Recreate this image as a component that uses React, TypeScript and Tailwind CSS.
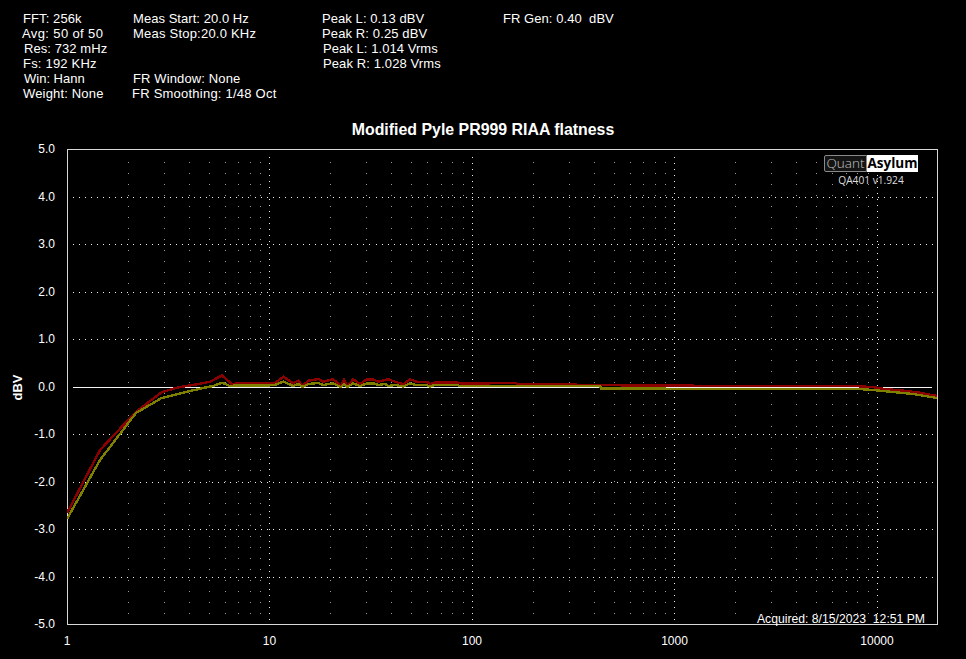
const MAJOR_Y = [197, 244.5, 292, 339.5, 434.5, 482, 529.5, 577];
const DECADES = [269, 472, 674, 877];
const MINOR_X: number[] = [];
for (let d = 0; d < 5; d++) {
  for (let n = 2; n <= 9; n++) {
    const x = Math.round(67 + 202.5 * (d + Math.log10(n)));
    if (x < 937) MINOR_X.push(x);
  }
}
const MINOR_Y: number[] = [];
for (let y = 162; y <= 613; y += 11) MINOR_Y.push(y);
const H_DOTS: number[] = [];
for (let x = 73; x < 934; x += 6.05) H_DOTS.push(Math.round(x));
const V_DOTS: number[] = [];
for (let y = 157; y < 622; y += 6) V_DOTS.push(y);

const RED =
  "67,513 100,450 136,411.7 161.7,392.3 176.7,387.7 196.7,384.3 210,381.7 222,375.5 231.7,384 240,383.3 270,383.3 275,383 283.3,376.7 293.3,383.3 298.3,380.7 302.7,385.7 308.3,380.7 318.3,379 323.3,381.7 333.3,379.3 340.7,385.7 344,380 347.3,385.7 353.3,379.3 360,384.3 366.7,379.3 373.3,379.3 378.3,381.7 385,380 388.3,379.3 395,381.7 403.3,384.3 410,379.3 416.7,381.7 426.7,381.7 430,384 435,382.3 456.7,382.3 460,383.3 490,383.3 516,383 517,384 576,384 577,385 621,385 622,385.5 693,385.5 694,386 853,386 871.7,387 883,388.7 906.7,391 920,392.7 937,396";
const YELLOW =
  "67,519 100,460 136,413 161.7,398 183,392.7 203,388 213,386 222,382.7 230,386 236.7,385.3 270,385.3 275,385 283.3,381.5 293.3,386 298.3,384 302.7,387 308.3,384 318.3,383 323.3,385 333.3,383.3 340.7,387 344,384 347.3,387 353.3,383.3 360,386.3 366.7,383.3 373.3,383.3 378.3,385 385,384 388.3,386 395,385 403.3,386.5 410,383.5 416.7,385 426.7,385 430,386.5 435,385 456.7,385 460,386 490,386 535,386 600,386 601,388.3 665,388.3 666,389 858,389 873,390 893,392 913,394 937,398";

function Col({ rows, className }: { rows: [string, string][]; className: string }) {
  return (
    <div className={className}>
      {rows.map(([pad, text], i) => (
        <div key={i} className={`h-[15px] whitespace-pre ${pad}`}>
          {text}
        </div>
      ))}
    </div>
  );
}

export default function App() {
  return (
    <div className="w-[966px] h-[659px] bg-black text-white overflow-hidden font-['Liberation_Sans',Arial,sans-serif] text-[12px] leading-[15px]">
      <div className="flex h-[101px] pt-[11px] text-[13px]">
        <Col
          className="w-[132px]"
          rows={[
            ["pl-[23px] tracking-[0.1px]", "FFT: 256k"],
            ["pl-[22px] tracking-[0.38px]", "Avg: 50 of 50"],
            ["pl-[24px] tracking-[0.08px]", "Res: 732 mHz"],
            ["pl-[23px] tracking-[0.2px]", "Fs: 192 KHz"],
            ["pl-[24px]", "Win: Hann"],
            ["pl-[23px] tracking-[0.17px]", "Weight: None"],
          ]}
        />
        <Col
          className="w-[190px]"
          rows={[
            ["pl-[1px] tracking-[0.05px]", "Meas Start: 20.0 Hz"],
            ["pl-[1px] tracking-[0.22px]", "Meas Stop:20.0 KHz"],
            ["", " "],
            ["", " "],
            ["pl-[1px] tracking-[0.13px]", "FR Window: None"],
            ["tracking-[0.23px]", "FR Smoothing: 1/48 Oct"],
          ]}
        />
        <Col
          className="w-[181px]"
          rows={[
            ["tracking-[0.07px]", "Peak L: 0.13 dBV"],
            ["tracking-[0.12px]", "Peak R: 0.25 dBV"],
            ["pl-[1px] tracking-[0.06px]", "Peak L: 1.014 Vrms"],
            ["pl-[1px] tracking-[0.11px]", "Peak R: 1.028 Vrms"],
          ]}
        />
        <Col className="w-[140px]" rows={[["tracking-[0.06px]", "FR Gen: 0.40  dBV"]]} />
      </div>

      <div className="h-[48px] pt-[21px] text-center text-[15.9px] leading-[16px] font-bold">
        Modified Pyle PR999 RIAA flatness
      </div>

      <div className="flex">
        <div className="w-[34px] h-[476px] flex items-center justify-center">
          <span className="-rotate-90 font-bold text-[13px] whitespace-nowrap">dBV</span>
        </div>
        <div className="w-[21px] h-[490px] -mt-[7px] mr-[12px] flex flex-col justify-between items-end">
          {["5.0", "4.0", "3.0", "2.0", "1.0", "0.0", "-1.0", "-2.0", "-3.0", "-4.0", "-5.0"].map((t) => (
            <div key={t} className="h-[15px] whitespace-nowrap">
              {t}
            </div>
          ))}
        </div>

        <div className="relative w-[871px] h-[476px] border border-[#d8d8d8]">
          <svg
            className="absolute -left-px -top-px"
            width={871}
            height={476}
            viewBox="67 149 871 476"
            shapeRendering="crispEdges"
          >
            {MINOR_X.map((x) =>
              MINOR_Y.map((y) => <rect key={`${x}-${y}`} x={x} y={y} width={1} height={1} fill="#9a9a9a" />)
            )}
            {MAJOR_Y.map((y) =>
              H_DOTS.map((x) => <rect key={`h${x}-${y}`} x={x} y={Math.floor(y)} width={1} height={1} fill="#f0f0f0" />)
            )}
            {DECADES.map((x) =>
              V_DOTS.map((y) => <rect key={`v${x}-${y}`} x={x} y={y} width={1} height={1} fill="#f0f0f0" />)
            )}
            <rect x={73} y={387} width={859} height={1} fill="#f4f4f4" />
            <polyline points={RED} fill="none" stroke="#8b0000" strokeWidth={2.4} />
            <polyline points={YELLOW} fill="none" stroke="#808000" strokeWidth={2.4} />
          </svg>

          <div className="absolute left-[756px] top-[5px] w-[94px] flex flex-col items-center">
            <div className="w-[94px] h-[17px] flex items-stretch leading-[15px]">
              <span className="w-[43px] border border-[#8a8a8a] rounded-l-[2px] bg-[#141414] text-[#c4c4c4] font-light text-center font-['Open_Sans',sans-serif] text-[13.5px]">
                Quant
              </span>
              <span className="flex-1 bg-white text-black font-bold text-center font-['Open_Sans',sans-serif] text-[13.5px] leading-[17px]">
                Asylum
              </span>
            </div>
            <div className="mt-[1px] text-[10.2px] leading-[14px] text-[#dcdcdc] whitespace-nowrap font-['Open_Sans',sans-serif]">
              QA401 v1.924
            </div>
          </div>

          <div className="absolute right-[12px] bottom-[-3px] whitespace-pre text-[12.2px]">Acquired: 8/15/2023  12:51 PM</div>
        </div>
      </div>

      <div className="flex pl-[47px] gap-[162.5px] mt-[2px]">
        {["1", "10", "100", "1000", "10000"].map((t) => (
          <div key={t} className="w-[40px] text-center h-[15px]">
            {t}
          </div>
        ))}
      </div>
    </div>
  );
}
